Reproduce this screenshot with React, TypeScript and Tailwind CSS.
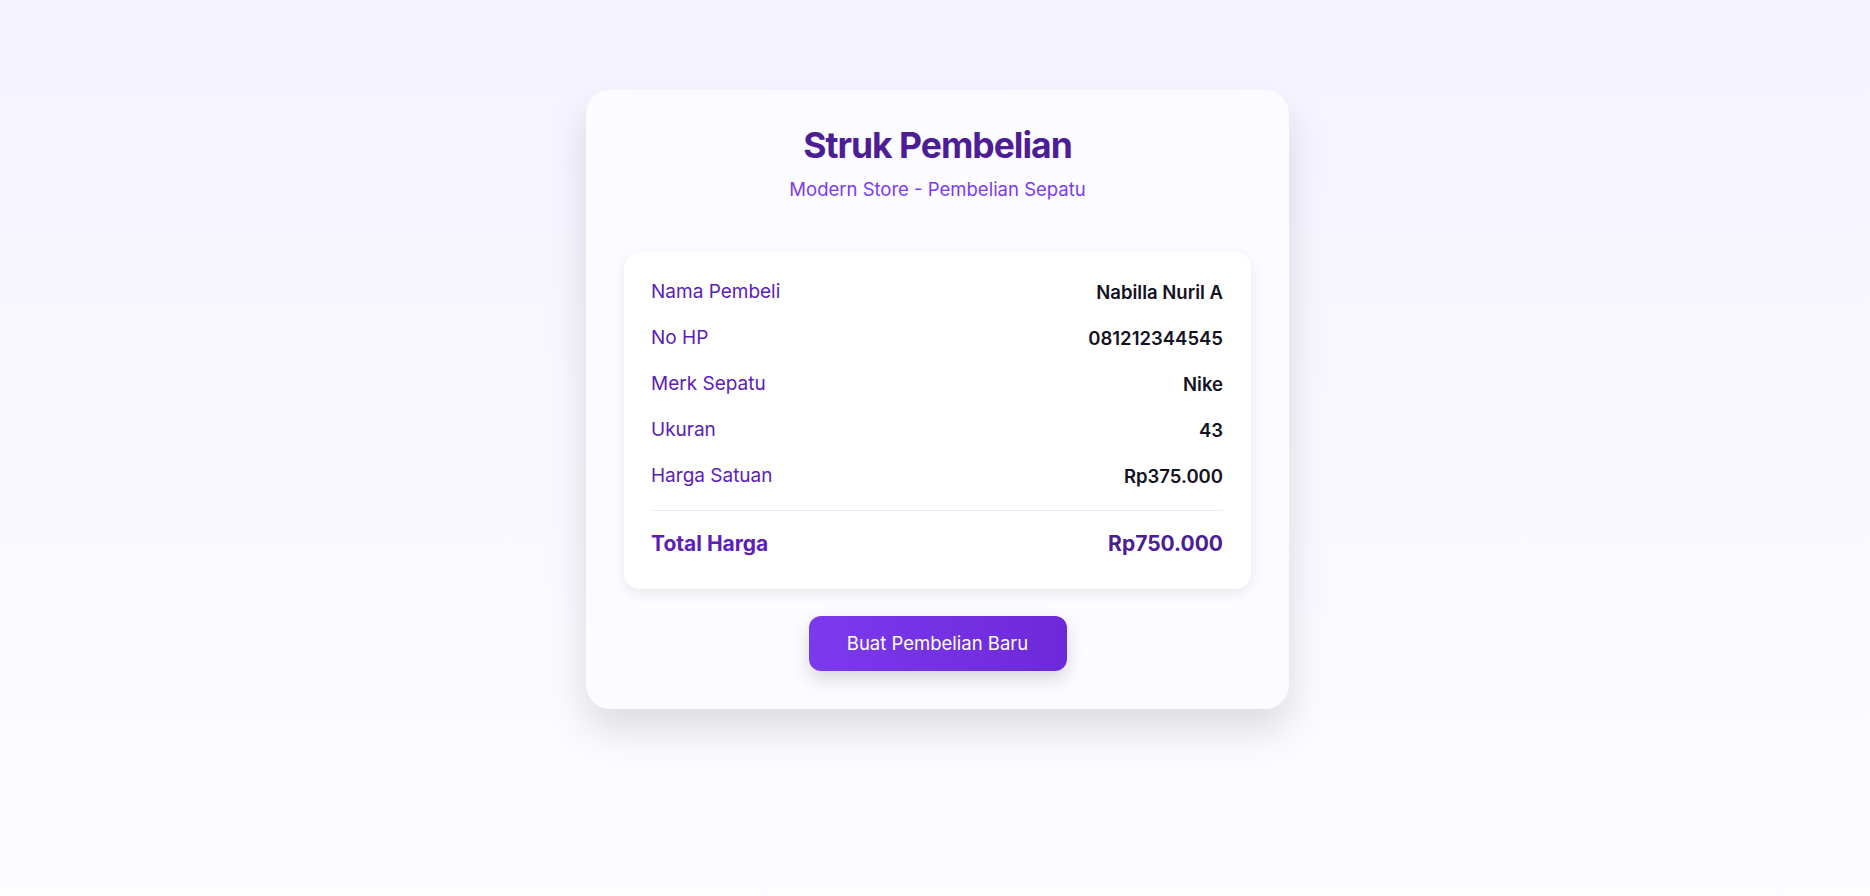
import React from "react";

const rows: [string, string][] = [
  ["Nama Pembeli", "Nabilla Nuril A"],
  ["No HP", "081212344545"],
  ["Merk Sepatu", "Nike"],
  ["Ukuran", "43"],
  ["Harga Satuan", "Rp375.000"],
];

export default function App() {
  return (
    <div
      className="min-h-[896px] w-full bg-gradient-to-b from-[#f5f3ff] to-[#fdfcff] flex justify-center pl-[5px]"
      style={{ fontFamily: "Inter, 'Noto Sans', sans-serif" }}
    >
      <div className="mt-[90px] mb-[60px] w-[703px] h-[619px] rounded-[24px] bg-[#fcfbff] px-[38px] pt-[35px] shadow-[0_20px_40px_rgba(0,0,0,0.13)] flex flex-col items-center">
        <h1 className="text-[35.5px] leading-[1.2] font-bold tracking-[-0.028em] text-[#4c1d95]">
          Struk Pembelian
        </h1>
        <p className="mt-[8px] text-[18.5px] leading-[1.5] text-[#7c3aed]">
          Modern Store - Pembelian Sepatu
        </p>
        <div className="mt-[49px] w-full rounded-[16px] bg-white pl-[27px] pr-[28px] pt-[17px] pb-[29px] shadow-[0_4px_14px_rgba(0,0,0,0.08)]">
          {rows.map(([k, v]) => (
            <div key={k} className="flex items-center justify-between py-[9px] leading-[28px]">
              <span className="text-[19px] text-[#5b21b6]">{k}</span>
              <span className="text-[18.5px] font-semibold text-[#141225]">{v}</span>
            </div>
          ))}
          <div className="mt-[11px] h-px bg-[#ede9fe]" />
          <div className="mt-[16px] flex items-center justify-between text-[21px] leading-[33px] font-bold">
            <span className="text-[#5b21b6]">Total Harga</span>
            <span className="text-[#4c1d95]">Rp750.000</span>
          </div>
        </div>
        <button className="mt-[27px] h-[55px] w-[258px] rounded-[12px] bg-gradient-to-r from-[#7c3aed] to-[#6d28d9] text-[18.5px] text-white shadow-[0_8px_18px_rgba(0,0,0,0.15)]">
          Buat Pembelian Baru
        </button>
      </div>
    </div>
  );
}
